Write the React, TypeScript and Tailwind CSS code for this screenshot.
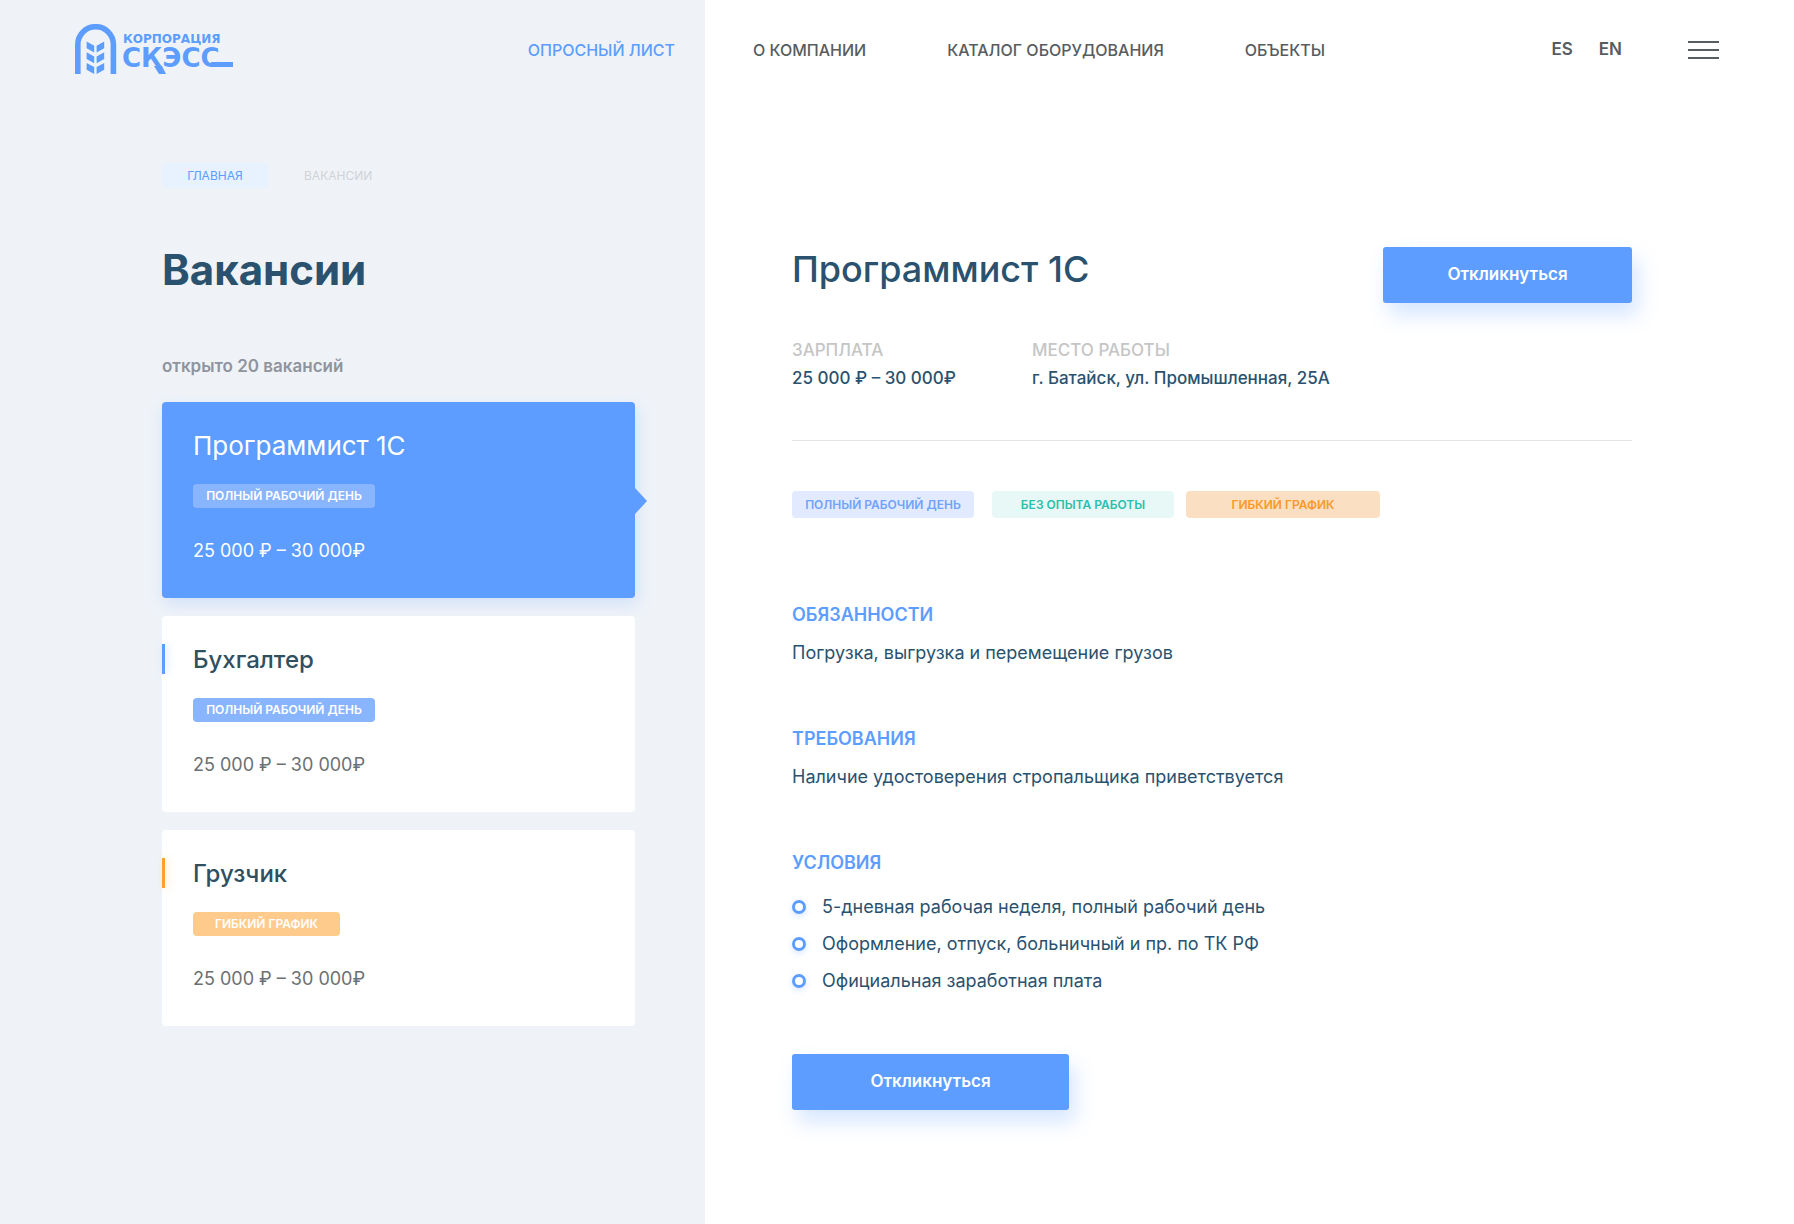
import clsx from "clsx";

interface IVacancy {
  id: string;
  title: string;
  schedule: string;
  salary: string;
  active?: boolean;
  flexible?: boolean;
}

const VACANCIES: IVacancy[] = [
  { id: "programmer", title: "Программист 1С", schedule: "ПОЛНЫЙ РАБОЧИЙ ДЕНЬ", salary: "25 000 ₽ – 30 000₽", active: true },
  { id: "accountant", title: "Бухгалтер", schedule: "ПОЛНЫЙ РАБОЧИЙ ДЕНЬ", salary: "25 000 ₽ – 30 000₽" },
  { id: "loader", title: "Грузчик", schedule: "ГИБКИЙ ГРАФИК", salary: "25 000 ₽ – 30 000₽", flexible: true },
];

const CONDITIONS = [
  "5-дневная рабочая неделя, полный рабочий день",
  "Оформление, отпуск, больничный и пр. по ТК РФ",
  "Официальная заработная плата",
];

const Logo = () => (
  <svg width="160" height="52" viewBox="0 0 160 52" fill="#5c9dff" role="img" aria-label="Корпорация СКЭСС">
    <path d="M2.8 50V20.5a17.8 17.8 0 0 1 35.6 0V50" fill="none" stroke="#5c9dff" strokeWidth="5.6" />
    {[17.5, 28.2, 38.9].map((y) => (
      <g key={y} transform={`translate(0 ${y})`}>
        <path d="M11.6 0L19.2 4.2V11L11.6 6.8Z" />
        <path d="M29.2 0L21.6 4.2V11L29.2 6.8Z" />
      </g>
    ))}
    <text x="48" y="19" fontFamily="DejaVu Sans, sans-serif" fontWeight="700" fontSize="12">
      КОРПОРАЦИЯ
    </text>
    <text x="47" y="43" fontFamily="DejaVu Sans, sans-serif" fontWeight="700" fontSize="26">
      СКЭСС
    </text>
    {/* swash below the wordmark and its tail */}
    <path d="M79 42H87L91 50H84Z" />
    <rect x="136" y="38" width="22" height="5" />
  </svg>
);

const ApplyButton = ({ className }: { className: string }) => (
  <button
    type="button"
    className={clsx(
      "h-14 shrink-0 rounded-[3px] bg-[#5c9dff] text-[17px] font-semibold text-white shadow-[6px_12px_20px_rgba(92,157,255,0.25)]",
      className
    )}
  >
    Откликнуться
  </button>
);

const VacancyCard = ({ vacancy }: { vacancy: IVacancy }) => {
  const { title, schedule, salary, active, flexible } = vacancy;

  return (
    <li>
      <a
        href={`#${vacancy.id}`}
        className={clsx(
          "relative block rounded px-[31px] pt-7 pb-[35px]",
          active ? "bg-[#5c9dff] shadow-[2px_6px_16px_rgba(92,157,255,0.2)]" : "bg-white"
        )}
      >
        {active ? (
          <svg className="absolute top-[86px] left-full" width="12" height="26" viewBox="0 0 12 26" fill="#5c9dff">
            <path d="M0 0L12 13L0 26Z" />
          </svg>
        ) : (
          <span
            className={clsx(
              "absolute top-7 left-0 h-[30px] w-[3px]",
              flexible ? "bg-[#ff9f2e] shadow-[2px_0_8px_rgba(255,159,46,0.3)]" : "bg-[#5c9dff] shadow-[2px_0_8px_rgba(92,157,255,0.3)]"
            )}
          />
        )}
        <h2 className={clsx("leading-8", active ? "text-[26px] text-white" : "text-2xl font-medium text-[#2e5060]")}>{title}</h2>
        <span
          className={clsx(
            "mt-[22px] flex h-6 items-center justify-center rounded text-xs font-semibold text-white",
            flexible ? "w-[147px] bg-[#ffcb8c]" : "w-[182px] bg-[#89b5ff]"
          )}
        >
          {schedule}
        </span>
        <p className={clsx("mt-[31px] text-lg leading-6", active ? "text-white" : "text-[#6b7073]")}>{salary}</p>
      </a>
    </li>
  );
};

const SectionTitle = ({ children }: { children: string }) => (
  <h3 className="text-lg leading-7 font-semibold text-[#5c9dff]">{children}</h3>
);

export default function App() {
  return (
    <div className="grid min-h-screen grid-cols-[705fr_1089fr] bg-white font-[Inter,sans-serif] text-[#2a526e]">
      <div className="bg-[#eff3f8]">
        <header className="flex h-[100px] items-center justify-between pr-[30px] pl-[75px]">
          <a href="#home">
            <Logo />
          </a>
          <a href="#survey" className="text-base font-medium text-[#5c9dff]">
            ОПРОСНЫЙ ЛИСТ
          </a>
        </header>

        <div className="pt-[63px] pr-[70px] pl-[162px]">
          <nav className="flex items-center gap-9 text-xs" aria-label="Навигация">
            <a href="#home" className="flex h-[25px] w-[106px] items-center justify-center rounded bg-[#e8f1fe] text-[#5c9dff]">
              ГЛАВНАЯ
            </a>
            <span className="text-[#cfd2d6]">ВАКАНСИИ</span>
          </nav>
          <h1 className="mt-[54px] text-[42px] leading-14 font-bold">Вакансии</h1>
          <p className="mt-14 text-[17px] leading-6 font-semibold text-[#8f949d]">открыто 20 вакансий</p>
          <ul className="mt-6 flex flex-col gap-[18px]">
            {VACANCIES.map((vacancy) => (
              <VacancyCard key={vacancy.id} vacancy={vacancy} />
            ))}
          </ul>
        </div>
      </div>

      <div>
        <header className="flex h-[100px] items-center pr-[75px] pl-12 text-[#575c5f]">
          <nav className="flex gap-[81px] text-base font-medium" aria-label="Меню">
            <a href="#about">О КОМПАНИИ</a>
            <a href="#catalog">КАТАЛОГ ОБОРУДОВАНИЯ</a>
            <a href="#objects">ОБЪЕКТЫ</a>
          </nav>
          <div className="ml-auto flex gap-[26px] text-[17px] font-semibold">
            <a href="#es">ES</a>
            <a href="#en">EN</a>
          </div>
          <button type="button" aria-label="Открыть меню" className="ml-[66px] flex w-[31px] flex-col gap-[6px]">
            <span className="h-[2px] w-full bg-[#575c5f]" />
            <span className="h-[2px] w-full bg-[#575c5f]" />
            <span className="h-[2px] w-full bg-[#575c5f]" />
          </button>
        </header>

        <main className="pt-[147px] pr-[162px] pb-[114px] pl-[87px]">
          <div className="flex items-start justify-between gap-8">
            <h2 className="text-4xl leading-11 font-medium">Программист 1С</h2>
            <ApplyButton className="w-[249px]" />
          </div>

          <dl className="mt-[33px] grid grid-cols-[240px_1fr] text-[17px] leading-7 font-medium">
            <div>
              <dt className="text-[#c5c5c5]">ЗАРПЛАТА</dt>
              <dd>25 000 ₽ – 30 000₽</dd>
            </div>
            <div>
              <dt className="text-[#c5c5c5]">МЕСТО РАБОТЫ</dt>
              <dd>г. Батайск, ул. Промышленная, 25А</dd>
            </div>
          </dl>

          <hr className="mt-12 border-[#e4e4e6]" />

          <ul className="mt-[50px] flex text-xs font-semibold">
            <li className="flex h-[27px] w-[182px] items-center justify-center rounded bg-[#e2eaff] text-[#70a3fb]">ПОЛНЫЙ РАБОЧИЙ ДЕНЬ</li>
            <li className="ml-[18px] flex h-[27px] w-[182px] items-center justify-center rounded bg-[#e8f8f6] text-[#2bbfae]">БЕЗ ОПЫТА РАБОТЫ</li>
            <li className="ml-3 flex h-[27px] w-[194px] items-center justify-center rounded bg-[#fbdfc2] text-[#f79a27]">ГИБКИЙ ГРАФИК</li>
          </ul>

          <div className="mt-[83px] flex flex-col gap-[58px] text-lg leading-7">
            <section>
              <SectionTitle>ОБЯЗАННОСТИ</SectionTitle>
              <p className="mt-[10px]">Погрузка, выгрузка и перемещение грузов</p>
            </section>
            <section>
              <SectionTitle>ТРЕБОВАНИЯ</SectionTitle>
              <p className="mt-[10px]">Наличие удостоверения стропальщика приветствуется</p>
            </section>
            <section>
              <SectionTitle>УСЛОВИЯ</SectionTitle>
              <ul className="mt-4 flex flex-col gap-[9px]">
                {CONDITIONS.map((item) => (
                  <li key={item} className="flex items-center gap-4">
                    <span className="size-[14px] shrink-0 rounded-full border-3 border-[#5c9dff] shadow-[0_2px_6px_rgba(92,157,255,0.25)]" />
                    {item}
                  </li>
                ))}
              </ul>
            </section>
          </div>

          <ApplyButton className="mt-[59px] w-[277px]" />
        </main>
      </div>
    </div>
  );
}
